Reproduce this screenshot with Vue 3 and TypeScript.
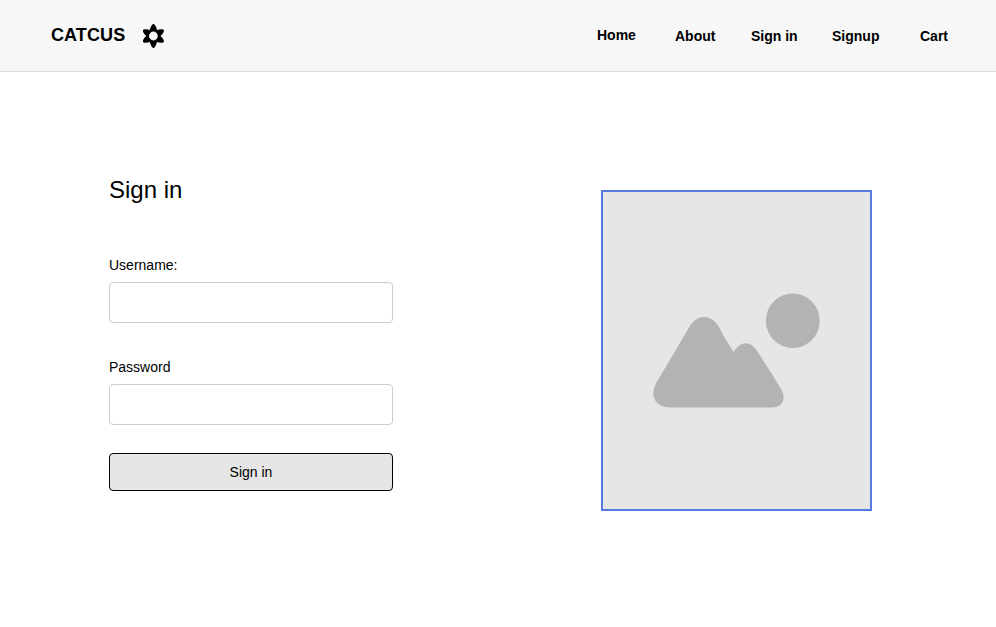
<script setup lang="ts">
import { ref } from 'vue'

interface NavLink {
  label: string
  slug: string
}

const links: NavLink[] = [
  { label: 'Home', slug: 'home' },
  { label: 'About', slug: 'about' },
  { label: 'Sign in', slug: 'signin' },
  { label: 'Signup', slug: 'signup' },
  { label: 'Cart', slug: 'cart' },
]
const petals = [0, 60, 120, 180, 240, 300]

const username = ref('')
const password = ref('')
</script>

<template>
  <div class="page">
    <header class="header">
      <div class="brand">
        <span class="name">CATCUS</span>
        <svg class="logo" viewBox="-12.4 -12 24 24" aria-hidden="true">
          <path
            v-for="angle in petals"
            :key="angle"
            :transform="`rotate(${angle})`"
            d="M-2.6 -4.5 L-3.5 -6.1 C-3.2 -8.2 -2.4 -9.8 -1.3 -11.3 Q0 -12.7 1.3 -11.3 C2.4 -9.8 3.2 -8.2 3.5 -6.1 L2.6 -4.5 Z"
          />
          <circle class="ring" r="5.5" />
        </svg>
      </div>
      <nav class="nav">
        <a v-for="link in links" :key="link.slug" :class="['link', link.slug]">{{ link.label }}</a>
      </nav>
    </header>

    <main class="main">
      <form class="form" @submit.prevent>
        <h1 class="title">Sign in</h1>
        <label class="field">
          <span class="label">Username:</span>
          <input v-model="username" class="input" type="text" />
        </label>
        <label class="field">
          <span class="label">Password</span>
          <input v-model="password" class="input" type="password" />
        </label>
        <button class="submit" type="submit">Sign in</button>
      </form>

      <div class="picture">
        <svg viewBox="0 0 267 317" aria-hidden="true">
          <path
            d="M53.7 190.3 L86 135.5 C90 128.5 95 125 101 125 C107 125 112 128.5 116 135 L122 146.5 L130.7 160 C134 154 138.5 151.2 142.7 151.2 C147 151.2 151 154 154.5 159.5 Q166 177 177.7 196.5 C183.5 206.5 180.5 215.3 168.7 215.6 L68 215.6 C52 215.3 46 204 53.7 190.3 Z"
          />
          <ellipse cx="189.8" cy="128.7" rx="26.9" ry="27.3" />
        </svg>
      </div>
    </main>
  </div>
</template>

<style>
body {
  background: #fff;
}
</style>

<style scoped>
.page {
  box-sizing: border-box;
  min-height: 627px;
  color: #000;
  font-family: 'Liberation Sans', Arial, sans-serif;
  font-size: 14px;
}
.header {
  box-sizing: border-box;
  display: flex;
  justify-content: space-between;
  align-items: center;
  height: 72px;
  padding: 0 48px 0 51px;
  background: #f7f7f7;
  border-bottom: 1px solid #dcdcdc;
}
.brand {
  display: flex;
  align-items: center;
}
.name {
  width: 90px;
  padding-bottom: 2px;
  font-size: 18px;
  font-weight: 700;
  line-height: 22px;
  letter-spacing: 0.1px;
}
.logo {
  display: block;
  width: 24px;
  height: 24px;
  margin-top: 1px;
}
.ring {
  fill: #f7f7f7;
  stroke: #000;
  stroke-width: 2.2;
}
.nav {
  display: grid;
  grid-template-columns: 78px 76px 81px 88px 28px;
  font-weight: 700;
  line-height: 16px;
}
.link {
  padding-top: 1px;
  white-space: nowrap;
}
.home {
  padding-top: 0;
}
.main {
  display: flex;
  align-items: flex-start;
  padding-left: 109px;
}
.form {
  display: flex;
  flex-direction: column;
  width: 284px;
  margin-top: 104px;
}
.title {
  margin: 0 0 53px;
  font-size: 24px;
  font-weight: 400;
  line-height: 28px;
}
.field {
  display: flex;
  flex-direction: column;
  gap: 9px;
  margin-bottom: 36px;
}
.field + .field {
  margin-bottom: 28px;
}
.label {
  line-height: 16px;
}
.input {
  box-sizing: border-box;
  width: 100%;
  height: 41px;
  padding: 0 10px;
  font: inherit;
  background: #fff;
  border: 1px solid #ccc;
  border-radius: 4px;
  outline: none;
}
.submit {
  box-sizing: border-box;
  height: 38px;
  padding: 0;
  color: #000;
  font: inherit;
  background: #e6e6e6;
  border: 1px solid #000;
  border-radius: 4px;
}
.picture {
  box-sizing: border-box;
  width: 271px;
  height: 321px;
  margin: 118px 0 0 208px;
  background: #e6e6e6;
  border: 2px solid #567be0;
}
.picture svg {
  display: block;
  width: 267px;
  height: 317px;
  fill: #b3b3b3;
}
</style>
